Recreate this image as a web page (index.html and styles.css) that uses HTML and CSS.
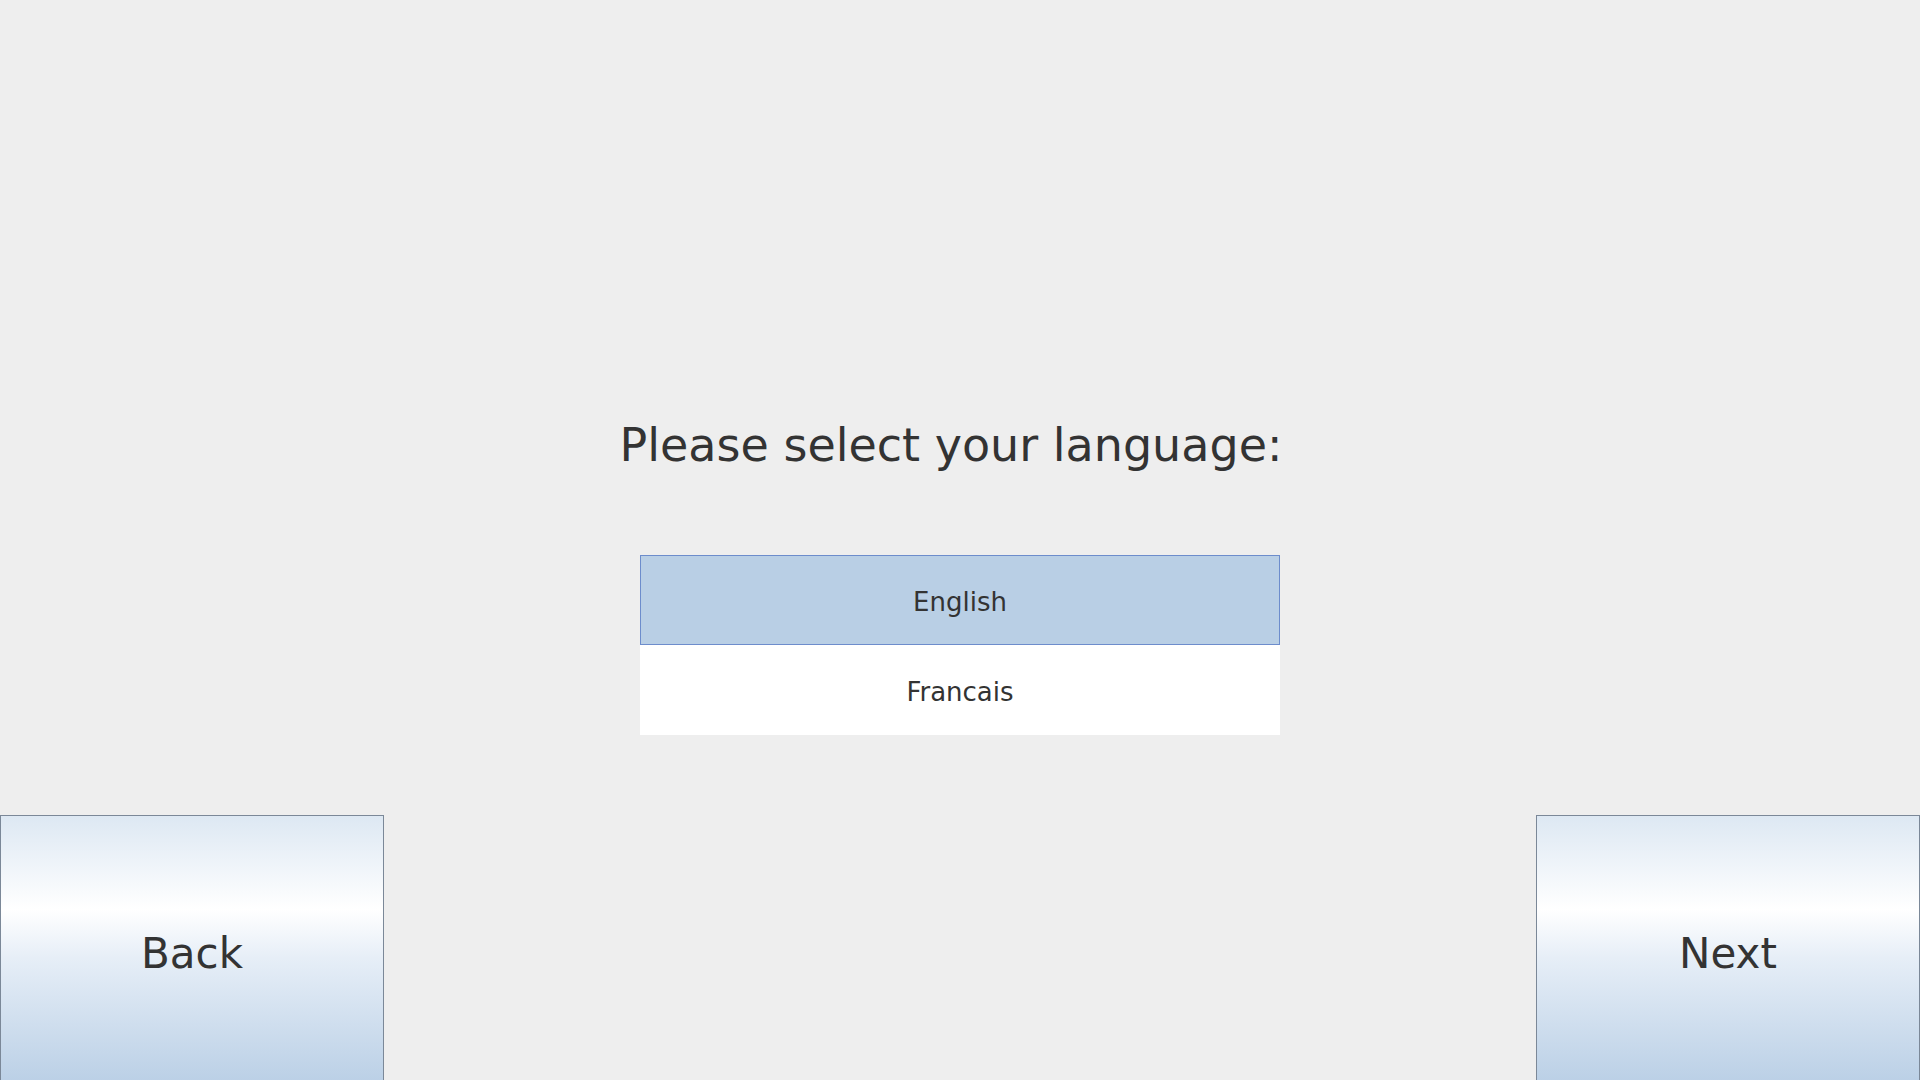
FILE: index.html
```html
<!DOCTYPE html>
<html lang="en">
<head>
<meta charset="utf-8">
<title>Language</title>
<link rel="stylesheet" href="styles.css">
</head>
<body>
<div class="screen">
  <h1 class="title">Please select your language:</h1>
  <ul class="list">
    <li class="item selected">English</li>
    <li class="item">Francais</li>
  </ul>
  <div class="actions">
    <button class="btn">Back</button>
    <button class="btn">Next</button>
  </div>
</div>
</body>
</html>
```
FILE: styles.css
```css
html, body {
  margin: 0;
  padding: 0;
  background: #eeeeee;
  overflow: hidden;
}
body {
  font-family: "DejaVu Sans", Verdana, sans-serif;
  color: #333333;
}
.screen {
  width: 1920px;
  height: 1080px;
  display: flex;
  flex-direction: column;
  align-items: center;
  padding-top: 419px;
  box-sizing: border-box;
}
.title {
  margin: 0 18px 84px 0;
  font-size: 46px;
  font-weight: normal;
  line-height: 52px;
}
.list {
  list-style: none;
  margin: 0;
  padding: 0;
  width: 640px;
}
.item {
  height: 90px;
  display: flex;
  align-items: center;
  justify-content: center;
  padding-top: 3px;
  font-size: 26px;
  background: #ffffff;
  box-sizing: border-box;
}
.item.selected {
  background: #b9cfe5;
  border: 1px solid #6d8dcc;
}
.actions {
  width: 100%;
  display: flex;
  justify-content: space-between;
  margin-top: 80px;
}
.btn {
  width: 384px;
  height: 276px;
  flex: none;
  border: 1px solid #7b8898;
  background: linear-gradient(to bottom, #dde8f3 0%, #ffffff 34%, #e6eef7 52%, #b8cee5 100%);
  font-family: "DejaVu Sans", Verdana, sans-serif;
  font-size: 42px;
  color: #333333;
  padding: 0;
  margin: 0;
}
```
